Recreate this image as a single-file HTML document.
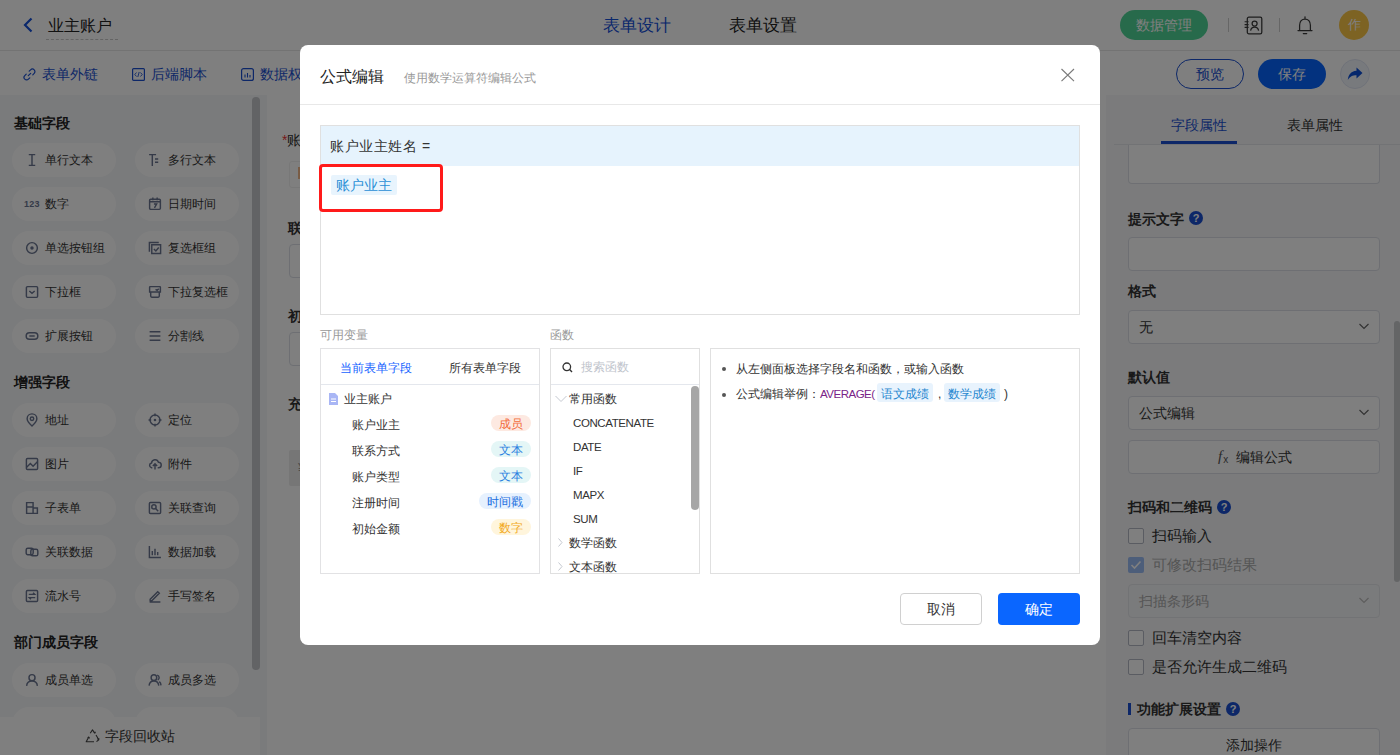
<!DOCTYPE html>
<html><head><meta charset="utf-8">
<style>
*{box-sizing:border-box;margin:0;padding:0}
html,body{width:1400px;height:755px;overflow:hidden;background:#fff;font-family:"Liberation Sans",sans-serif;color:#333}
.a{position:absolute;white-space:nowrap}
#top{position:absolute;left:0;top:0;width:1400px;height:51px;background:#fff;border-bottom:1px solid #e6e6e6}
#tool{position:absolute;left:0;top:51px;width:1400px;height:44px;background:#fff}
#left{position:absolute;left:0;top:95px;width:267px;height:660px;background:#f5f6f8}
#canvas{position:absolute;left:267px;top:95px;width:839px;height:660px;background:#fff}
#right{position:absolute;left:1106px;top:95px;width:294px;height:660px;background:#f6f7f9}
#mask{position:absolute;left:0;top:0;width:1400px;height:755px;background:rgba(0,0,0,.5)}
#modal{position:absolute;left:300px;top:45px;width:800px;height:600px;background:#fff;border-radius:8px}
.pill{position:absolute;height:34px;width:104px;border-radius:17px;background:#fff;font-size:13px;line-height:33px;color:#333}
.pill i{position:absolute;left:16px;top:0;font-style:normal}
.pill span{position:absolute;left:32px;top:1px;font-size:12px}
.tag{position:absolute;height:16px;border-radius:8px;font-size:12px;line-height:18px;text-align:center}
.fn{left:22px;font-size:11.5px;line-height:14px;color:#333;letter-spacing:-0.4px}
.sec{position:absolute;left:14px;font-size:14px;font-weight:bold;color:#222}
</style></head><body>
<div id="top">
  <svg class="a" style="left:22px;top:17px" width="12" height="16" viewBox="0 0 12 16"><path d="M9.5 1.5 L3 8 L9.5 14.5" fill="none" stroke="#1550d8" stroke-width="2.2"/></svg>
  <div class="a" style="left:48px;top:16px;font-size:16px;line-height:20px;color:#222">业主账户</div>
  <div class="a" style="left:46px;top:39px;width:72px;border-top:1px dashed #c8c8c8"></div>
  <div class="a" style="left:603px;top:16px;font-size:17px;line-height:20px;color:#1550d8">表单设计</div>
  <div class="a" style="left:729px;top:16px;font-size:17px;line-height:20px;color:#222">表单设置</div>
  <div class="a" style="left:1120px;top:10px;width:88px;height:30px;border-radius:15px;background:#4fd496;color:#fff;font-size:14px;line-height:30px;text-align:center">数据管理</div>
  <div class="a" style="left:1228px;top:18px;width:1px;height:14px;background:#ccc"></div>
  <svg class="a" style="left:1244px;top:16px" width="19" height="19" viewBox="0 0 19 19"><rect x="3.3" y="1.2" width="14.5" height="16.6" rx="1.6" fill="none" stroke="#3a3a3a" stroke-width="1.25"/><circle cx="10.6" cy="7.6" r="2.5" fill="none" stroke="#3a3a3a" stroke-width="1.25"/><path d="M6.6 14.6C7 12.2 8.5 11 10.6 11S14.2 12.2 14.6 14.6" fill="none" stroke="#3a3a3a" stroke-width="1.25"/><path d="M0.6 5.8H4.6M0.6 8.6H4.6M0.6 11.4H4.6" stroke="#3a3a3a" stroke-width="1.1"/></svg>
  <div class="a" style="left:1279px;top:18px;width:1px;height:14px;background:#ccc"></div>
  <svg class="a" style="left:1297px;top:16px" width="16" height="19" viewBox="0 0 16 19"><path d="M8 0.8V2.8M2.6 14.4V9.2C2.6 5.6 4.9 3 8 3S13.4 5.6 13.4 9.2V14.4M1 14.6H15M6.3 17.6H9.7" fill="none" stroke="#3a3a3a" stroke-width="1.25" stroke-linecap="round"/></svg>
  <div class="a" style="left:1339px;top:10px;width:30px;height:30px;border-radius:15px;background:#fac646;color:#fff;font-size:13px;line-height:30px;text-align:center">作</div>
</div>
<div id="tool">
  <svg class="a" style="left:23px;top:17px" width="13" height="13" viewBox="0 0 13 13"><path d="M5.3 7.7L7.7 5.3M6.2 3.2L7.6 1.8A2.4 2.4 0 0 1 11.2 5.4L9.8 6.8M6.8 9.8L5.4 11.2A2.4 2.4 0 0 1 1.8 7.6L3.2 6.2" fill="none" stroke="#1a4fd0" stroke-width="1.2" stroke-linecap="round"/></svg>
  <div class="a" style="left:42px;top:15px;font-size:14px;line-height:16px;color:#1a4fd0">表单外链</div>
  <svg class="a" style="left:132px;top:17px" width="13" height="13" viewBox="0 0 13 13"><rect x="0.6" y="0.6" width="11.8" height="11.8" rx="1" fill="none" stroke="#1a4fd0" stroke-width="1.2"/><path d="M4.5 4.5L2.8 6.5L4.5 8.5M8.5 4.5L10.2 6.5L8.5 8.5M7.2 4L5.8 9" fill="none" stroke="#1a4fd0" stroke-width="0.9"/></svg>
  <div class="a" style="left:151px;top:15px;font-size:14px;line-height:16px;color:#1a4fd0">后端脚本</div>
  <svg class="a" style="left:241px;top:17px" width="13" height="13" viewBox="0 0 13 13"><rect x="0.6" y="0.6" width="11.8" height="11.8" rx="2" fill="none" stroke="#1a4fd0" stroke-width="1.2"/><path d="M4 6.5V9.5M6.5 5V9.5M9 7V9.5" stroke="#1a4fd0" stroke-width="1.1"/></svg>
  <div class="a" style="left:260px;top:15px;font-size:14px;line-height:16px;color:#1a4fd0">数据权限</div>
  <div class="a" style="left:1176px;top:8px;width:68px;height:30px;border:1.3px solid #1a4fd0;border-radius:15px;font-size:14px;line-height:28px;text-align:center;color:#1a4fd0">预览</div>
  <div class="a" style="left:1258px;top:8px;width:68px;height:30px;border-radius:15px;background:#0664ff;font-size:14px;line-height:30px;text-align:center;color:#fff">保存</div>
  <div class="a" style="left:1340px;top:8px;width:30px;height:30px;border-radius:15px;background:#f1f4fb;border:1px solid #dfe5f2"></div>
  <svg class="a" style="left:1347px;top:16px" width="16" height="14" viewBox="0 0 16 14"><path d="M9.5 0.5L15.5 6L9.5 11.5V8.3C5.5 8.3 3 9.5 0.8 13C1.3 8 3.8 4.2 9.5 3.8Z" fill="#0a4fd8"/></svg>
</div>
<div id="left">
<div class="sec" style="top:20px">基础字段</div>
<div class="pill" style="left:12px;top:48px"><svg class="a" style="left:13px;top:10px" width="14" height="14" viewBox="-0.5 -0.5 13 13"><path d="M3 1H9M6 1V11M3 11H9" fill="none" stroke="#6a7590" stroke-width="1.35"/></svg><span style="left:33px">单行文本</span></div>
<div class="pill" style="left:135px;top:48px"><svg class="a" style="left:13px;top:10px" width="14" height="14" viewBox="-0.5 -0.5 13 13"><path d="M0.5 1H7M3.5 1V11.5M6 5H9M6 8H9" fill="none" stroke="#6a7590" stroke-width="1.35"/></svg><span style="left:33px">多行文本</span></div>
<div class="pill" style="left:12px;top:92px"><div class="a" style="left:12px;top:12px;font-size:9px;line-height:10px;font-weight:bold;color:#6a7590;letter-spacing:0.2px">123</div><span style="left:33px">数字</span></div>
<div class="pill" style="left:135px;top:92px"><svg class="a" style="left:13px;top:10px" width="14" height="14" viewBox="-0.5 -0.5 13 13"><rect x="1" y="1.5" width="10" height="9.5" rx="1" fill="none" stroke="#6a7590" stroke-width="1.35"/><path d="M1 4H11M4 0V2.5M8 0V2.5M5 6H7.5L5.5 9.5" fill="none" stroke="#6a7590" stroke-width="1.35"/></svg><span style="left:33px">日期时间</span></div>
<div class="pill" style="left:12px;top:136px"><svg class="a" style="left:13px;top:10px" width="14" height="14" viewBox="-0.5 -0.5 13 13"><circle cx="6" cy="6" r="5" fill="none" stroke="#6a7590" stroke-width="1.35"/><circle cx="6" cy="6" r="1.6" fill="#6a7590"/></svg><span style="left:33px">单选按钮组</span></div>
<div class="pill" style="left:135px;top:136px"><svg class="a" style="left:13px;top:10px" width="14" height="14" viewBox="-0.5 -0.5 13 13"><path d="M0.8 9.5V0.8H9.5M3 3H11.2V11.2H3Z M5 7L6.8 8.8L9.5 5.5" fill="none" stroke="#6a7590" stroke-width="1.35"/></svg><span style="left:33px">复选框组</span></div>
<div class="pill" style="left:12px;top:180px"><svg class="a" style="left:13px;top:10px" width="14" height="14" viewBox="-0.5 -0.5 13 13"><rect x="0.8" y="1" width="10.4" height="10" rx="1" fill="none" stroke="#6a7590" stroke-width="1.35"/><path d="M3.5 5L6 7.2L8.5 5" fill="none" stroke="#6a7590" stroke-width="1.35"/></svg><span style="left:33px">下拉框</span></div>
<div class="pill" style="left:135px;top:180px"><svg class="a" style="left:13px;top:10px" width="14" height="14" viewBox="-0.5 -0.5 13 13"><path d="M1.5 1H10.5Q11 1 11 1.5V6H1V1.5Q1 1 1.5 1ZM2 6V9.8Q2 10.8 3 10.8H9Q10 10.8 10 9.8V6M6.5 3.5L8 4.5L9.5 3" fill="none" stroke="#6a7590" stroke-width="1.35"/></svg><span style="left:33px">下拉复选框</span></div>
<div class="pill" style="left:12px;top:224px"><svg class="a" style="left:13px;top:10px" width="14" height="14" viewBox="-0.5 -0.5 13 13"><rect x="0.6" y="3" width="10.8" height="6" rx="3" fill="none" stroke="#6a7590" stroke-width="1.35"/><path d="M3.5 6H8.5" fill="none" stroke="#6a7590" stroke-width="1.35"/></svg><span style="left:33px">扩展按钮</span></div>
<div class="pill" style="left:135px;top:224px"><svg class="a" style="left:13px;top:10px" width="14" height="14" viewBox="-0.5 -0.5 13 13"><path d="M1 2H11M1 6H11M1 10H11" fill="none" stroke="#6a7590" stroke-width="1.35"/></svg><span style="left:33px">分割线</span></div>
<div class="sec" style="top:279px">增强字段</div>
<div class="pill" style="left:12px;top:308px"><svg class="a" style="left:13px;top:10px" width="14" height="14" viewBox="-0.5 -0.5 13 13"><path d="M6 11.5C6 11.5 1.5 7.5 1.5 4.8A4.5 4.5 0 0 1 10.5 4.8C10.5 7.5 6 11.5 6 11.5Z" fill="none" stroke="#6a7590" stroke-width="1.35"/><circle cx="6" cy="4.8" r="1.6" fill="none" stroke="#6a7590" stroke-width="1.35"/></svg><span style="left:33px">地址</span></div>
<div class="pill" style="left:135px;top:308px"><svg class="a" style="left:13px;top:10px" width="14" height="14" viewBox="-0.5 -0.5 13 13"><circle cx="6" cy="6" r="4.6" fill="none" stroke="#6a7590" stroke-width="1.35"/><circle cx="6" cy="6" r="1.2" fill="#6a7590"/><path d="M6 0V2.5M6 9.5V12M0 6H2.5M9.5 6H12" fill="none" stroke="#6a7590" stroke-width="1.35"/></svg><span style="left:33px">定位</span></div>
<div class="pill" style="left:12px;top:352px"><svg class="a" style="left:13px;top:10px" width="14" height="14" viewBox="-0.5 -0.5 13 13"><rect x="0.8" y="0.8" width="10.4" height="10.4" rx="1" fill="none" stroke="#6a7590" stroke-width="1.35"/><path d="M1 9L4.5 5.5L7 8L11 4" fill="none" stroke="#6a7590" stroke-width="1.35"/></svg><span style="left:33px">图片</span></div>
<div class="pill" style="left:135px;top:352px"><svg class="a" style="left:13px;top:10px" width="14" height="14" viewBox="-0.5 -0.5 13 13"><path d="M3.5 9.5H2.8A2.3 2.3 0 0 1 2.8 5A3.3 3.3 0 0 1 9.2 4.3A2.6 2.6 0 0 1 9.2 9.5H8.5M6 11V6M4 7.8L6 5.8L8 7.8" fill="none" stroke="#6a7590" stroke-width="1.35"/></svg><span style="left:33px">附件</span></div>
<div class="pill" style="left:12px;top:396px"><svg class="a" style="left:13px;top:10px" width="14" height="14" viewBox="-0.5 -0.5 13 13"><path d="M1 1H7V11H1ZM1 5H7M7 6H11V11H7" fill="none" stroke="#6a7590" stroke-width="1.35"/></svg><span style="left:33px">子表单</span></div>
<div class="pill" style="left:135px;top:396px"><svg class="a" style="left:13px;top:10px" width="14" height="14" viewBox="-0.5 -0.5 13 13"><rect x="0.8" y="0.8" width="10.4" height="10.4" rx="1" fill="none" stroke="#6a7590" stroke-width="1.35"/><circle cx="5" cy="5" r="2" fill="none" stroke="#6a7590" stroke-width="1.35"/><path d="M6.5 6.5L9 9" fill="none" stroke="#6a7590" stroke-width="1.35"/></svg><span style="left:33px">关联查询</span></div>
<div class="pill" style="left:12px;top:440px"><svg class="a" style="left:13px;top:10px" width="14" height="14" viewBox="-0.5 -0.5 13 13"><rect x="0.6" y="2.5" width="6.5" height="6" rx="1.5" fill="none" stroke="#6a7590" stroke-width="1.35"/><rect x="4.9" y="3.5" width="6.5" height="6" rx="1.5" fill="none" stroke="#6a7590" stroke-width="1.35"/></svg><span style="left:33px">关联数据</span></div>
<div class="pill" style="left:135px;top:440px"><svg class="a" style="left:13px;top:10px" width="14" height="14" viewBox="-0.5 -0.5 13 13"><path d="M0.8 0.5V11.2H11.5M3.5 9V5M6 9V3M8.5 9V6" fill="none" stroke="#6a7590" stroke-width="1.35"/></svg><span style="left:33px">数据加载</span></div>
<div class="pill" style="left:12px;top:484px"><svg class="a" style="left:13px;top:10px" width="14" height="14" viewBox="-0.5 -0.5 13 13"><rect x="0.8" y="0.8" width="10.4" height="10.4" rx="1" fill="none" stroke="#6a7590" stroke-width="1.35"/><path d="M3 4.5H8.5L7 3M9 7.5H3.5L5 9" fill="none" stroke="#6a7590" stroke-width="1.35"/></svg><span style="left:33px">流水号</span></div>
<div class="pill" style="left:135px;top:484px"><svg class="a" style="left:13px;top:10px" width="14" height="14" viewBox="-0.5 -0.5 13 13"><path d="M1.5 9L8.5 2L10 3.5L3 10.5H1.5ZM1 11.5H11" fill="none" stroke="#6a7590" stroke-width="1.35"/></svg><span style="left:33px">手写签名</span></div>
<div class="sec" style="top:539px">部门成员字段</div>
<div class="pill" style="left:12px;top:568px"><svg class="a" style="left:13px;top:10px" width="14" height="14" viewBox="-0.5 -0.5 13 13"><circle cx="6" cy="3.8" r="2.8" fill="none" stroke="#6a7590" stroke-width="1.35"/><path d="M1 11.5C1.3 8.5 3.3 7 6 7S10.7 8.5 11 11.5" fill="none" stroke="#6a7590" stroke-width="1.35"/></svg><span style="left:33px">成员单选</span></div>
<div class="pill" style="left:135px;top:568px"><svg class="a" style="left:13px;top:10px" width="14" height="14" viewBox="-0.5 -0.5 13 13"><circle cx="5" cy="3.8" r="2.6" fill="none" stroke="#6a7590" stroke-width="1.35"/><path d="M0.5 11.2C0.8 8.5 2.6 7 5 7S9.2 8.5 9.5 11.2M8 1.5A2.4 2.4 0 0 1 8.5 6M10 7.5C11 8.3 11.5 9.5 11.6 11" fill="none" stroke="#6a7590" stroke-width="1.35"/></svg><span style="left:33px">成员多选</span></div>
<div class="pill" style="left:12px;top:612px"><svg class="a" style="left:13px;top:10px" width="14" height="14" viewBox="-0.5 -0.5 13 13"></svg><span style="left:33px">部门单选</span></div>
<div class="pill" style="left:135px;top:612px"><svg class="a" style="left:13px;top:10px" width="14" height="14" viewBox="-0.5 -0.5 13 13"></svg><span style="left:33px">部门多选</span></div>
<div class="a" style="left:252px;top:2px;width:8px;height:573px;border-radius:4px;background:#c4c6ca"></div>
<div class="a" style="left:0;top:622px;width:260px;height:38px;background:#fff"></div>
<svg class="a" style="left:85px;top:634px" width="15" height="14" viewBox="0 0 15 14"><path d="M5.2 4.2L7.5 0.9L9.6 4M8.6 3.2L9.8 4.2L10.4 2.7M11 6L13.8 10.8L11.5 12.6M12.3 9.6L13.7 10.9L13.9 9.2M9 12.8H1.2L3.6 8.2M2.6 8.9L3.7 8L4.6 9.4" fill="none" stroke="#444" stroke-width="1.1" stroke-linejoin="round"/></svg>
<div class="a" style="left:105px;top:633px;font-size:14px;line-height:16px;color:#333">字段回收站</div>
</div>
<div id="canvas">
<div class="a" style="left:15px;top:37px;font-size:14px;line-height:16px;color:#333"><span style="color:#e33">*</span>账户业主</div>
<div class="a" style="left:22px;top:66px;width:400px;height:27px;border:1px solid #f0f0f0;border-radius:3px"></div>
<div class="a" style="left:31px;top:72px;width:2px;height:12px;background:#f3b98a"></div>
<div class="a" style="left:21px;top:125px;font-size:14px;line-height:16px;color:#333;font-weight:bold">联系方式</div>
<div class="a" style="left:22px;top:149px;width:400px;height:34px;border:1px solid #dcdfe6;border-radius:4px"></div>
<div class="a" style="left:21px;top:213px;font-size:14px;line-height:16px;color:#333;font-weight:bold">初始金额</div>
<div class="a" style="left:22px;top:237px;width:400px;height:34px;border:1px solid #dcdfe6;border-radius:4px"></div>
<div class="a" style="left:21px;top:301px;font-size:14px;line-height:16px;color:#333;font-weight:bold">充值金额</div>
<div class="a" style="left:22px;top:355px;width:400px;height:36px;background:#ececec;border-radius:2px"></div>
<div class="a" style="left:31px;top:365px;font-size:14px;line-height:16px;color:#999">¥</div>
</div>
<div id="right">

<div class="a" style="left:65px;top:22px;font-size:14px;line-height:16px;color:#1a4fd0;">字段属性</div>
<div class="a" style="left:181px;top:22px;font-size:14px;line-height:16px;color:#333;">表单属性</div>
<div class="a" style="left:8px;top:49px;width:286px;height:1px;background:#e4e6ea"></div>
<div class="a" style="left:55px;top:46px;width:76px;height:3px;background:#1a4fd0"></div>
<div class="a" style="left:22px;top:50px;width:252px;height:39px;background:#fff;border:1px solid #dcdfe6;border-top:none;border-radius:0 0 4px 4px;"></div>
<div class="a" style="left:22px;top:116px;font-size:14px;line-height:16px;color:#333;font-weight:bold;">提示文字</div>
<div class="a" style="left:83px;top:116px;width:14px;height:14px;border-radius:7px;background:#1a4fd0;color:#fff;font-size:11px;line-height:14px;text-align:center;font-weight:bold">?</div>
<div class="a" style="left:22px;top:142px;width:252px;height:34px;background:#fff;border:1px solid #dcdfe6;border-radius:4px;"></div>
<div class="a" style="left:22px;top:188px;font-size:14px;line-height:16px;color:#333;font-weight:bold;">格式</div>
<div class="a" style="left:22px;top:215px;width:252px;height:34px;background:#fff;border:1px solid #dcdfe6;border-radius:4px;"></div>
<div class="a" style="left:33px;top:224px;font-size:14px;line-height:16px;color:#333;">无</div>
<svg class="a" style="left:253px;top:228px" width="10" height="7" viewBox="0 0 10 7"><path d="M0.5 1L5 5.5L9.5 1" fill="none" stroke="#666" stroke-width="1.2"/></svg>
<div class="a" style="left:22px;top:274px;font-size:14px;line-height:16px;color:#333;font-weight:bold;">默认值</div>
<div class="a" style="left:22px;top:301px;width:252px;height:34px;background:#fff;border:1px solid #dcdfe6;border-radius:4px;"></div>
<div class="a" style="left:33px;top:310px;font-size:14px;line-height:16px;color:#333;">公式编辑</div>
<svg class="a" style="left:253px;top:314px" width="10" height="7" viewBox="0 0 10 7"><path d="M0.5 1L5 5.5L9.5 1" fill="none" stroke="#666" stroke-width="1.2"/></svg>
<div class="a" style="left:22px;top:345px;width:252px;height:34px;background:#fff;border:1px solid #dcdfe6;border-radius:4px;"></div>
<div class="a" style="left:112px;top:353px;font-size:15px;line-height:16px;color:#555;font-family:'Liberation Serif',serif;font-style:italic">f<span style="font-size:10px;font-style:normal;font-family:'Liberation Sans',sans-serif;position:relative;top:2px;left:1px">x</span></div>
<div class="a" style="left:130px;top:354px;font-size:14px;line-height:16px;color:#333;">编辑公式</div>
<div class="a" style="left:22px;top:404px;font-size:14px;line-height:16px;color:#333;font-weight:bold;">扫码和二维码</div>
<div class="a" style="left:111px;top:405px;width:14px;height:14px;border-radius:7px;background:#1a4fd0;color:#fff;font-size:11px;line-height:14px;text-align:center;font-weight:bold">?</div>
<div class="a" style="left:22px;top:433px;width:16px;height:16px;border-radius:2px;background:#fff;border:1px solid #b4b8c4"></div>
<div class="a" style="left:46px;top:433px;font-size:14.5px;line-height:16px;color:#333;">扫码输入</div>
<div class="a" style="left:22px;top:462px;width:16px;height:16px;border-radius:2px;background:#9bbcf5"></div><svg class="a" style="left:24px;top:465px" width="12" height="10" viewBox="0 0 12 10"><path d="M1.5 5L4.5 8L10.5 1.5" fill="none" stroke="#fff" stroke-width="1.6"/></svg>
<div class="a" style="left:46px;top:462px;font-size:14.5px;line-height:16px;color:#aaa;">可修改扫码结果</div>
<div class="a" style="left:22px;top:489px;width:252px;height:34px;background:#f5f6f8;border:1px solid #e4e6ea;border-radius:4px;"></div>
<div class="a" style="left:33px;top:498px;font-size:14px;line-height:16px;color:#aaa;">扫描条形码</div>
<svg class="a" style="left:253px;top:502px" width="10" height="7" viewBox="0 0 10 7"><path d="M0.5 1L5 5.5L9.5 1" fill="none" stroke="#bbb" stroke-width="1.2"/></svg>
<div class="a" style="left:22px;top:535px;width:16px;height:16px;border-radius:2px;background:#fff;border:1px solid #b4b8c4"></div>
<div class="a" style="left:46px;top:535px;font-size:14.5px;line-height:16px;color:#333;">回车清空内容</div>
<div class="a" style="left:22px;top:564px;width:16px;height:16px;border-radius:2px;background:#fff;border:1px solid #b4b8c4"></div>
<div class="a" style="left:46px;top:564px;font-size:14.5px;line-height:16px;color:#333;">是否允许生成二维码</div>
<div class="a" style="left:22px;top:608px;width:3px;height:12px;background:#1a4fd0"></div>
<div class="a" style="left:31px;top:606px;font-size:14px;line-height:16px;color:#333;font-weight:bold;">功能扩展设置</div>
<div class="a" style="left:120px;top:607px;width:14px;height:14px;border-radius:7px;background:#1a4fd0;color:#fff;font-size:11px;line-height:14px;text-align:center;font-weight:bold">?</div>
<div class="a" style="left:22px;top:633px;width:252px;height:62px;background:#fff;border:1px solid #dcdfe6;border-radius:4px;"></div>
<div class="a" style="left:120px;top:642px;font-size:14px;line-height:16px;color:#333;">添加操作</div>
<div class="a" style="left:288px;top:226px;width:6px;height:261px;border-radius:3px;background:#c8cacd"></div>
</div>
<div id="mask"></div>
<div id="modal">
  <div class="a" style="left:20px;top:22px;font-size:16px;line-height:20px;color:#222">公式编辑</div>
  <div class="a" style="left:104px;top:25px;font-size:12px;line-height:16px;color:#999">使用数学运算符编辑公式</div>
  <div class="a" style="left:0;top:59px;width:800px;border-top:1px solid #e8e8e8"></div>
  <svg class="a" style="left:760px;top:23px" width="15" height="14" viewBox="0 0 15 14"><path d="M1.5 1L14 13.2M14 1L1.5 13.2" stroke="#7a7a7a" stroke-width="1.15" fill="none"/></svg>
  <!-- formula box -->
  <div class="a" style="left:20px;top:80px;width:760px;height:190px;border:1px solid #e0e0e0">
    <div class="a" style="left:0;top:0;width:758px;height:40px;background:#e6f3fd"></div>
    <div class="a" style="left:9px;top:12px;font-size:14px;line-height:16px;color:#333;letter-spacing:0.6px">账户业主姓名 =</div>
    <div class="a" style="left:10px;top:49px;width:66px;height:20px;background:#e8f4fd;border-radius:2px"></div>
    <div class="a" style="left:15px;top:51px;font-size:14px;line-height:16px;color:#2a8fd6">账户业主</div>
  </div>
  <div class="a" style="left:19px;top:119px;width:124px;height:48px;border:3px solid #ff1a1a;border-radius:4px"></div>
  <!-- labels -->
  <div class="a" style="left:20px;top:283px;font-size:12px;line-height:14px;color:#999">可用变量</div>
  <div class="a" style="left:250px;top:283px;font-size:12px;line-height:14px;color:#999">函数</div>
  <!-- variables panel -->
  <div class="a" style="left:20px;top:303px;width:220px;height:226px;border:1px solid #e2e2e4">
    <div class="a" style="left:19px;top:12px;font-size:12px;line-height:14px;color:#1764ff">当前表单字段</div>
    <div class="a" style="left:128px;top:12px;font-size:12px;line-height:14px;color:#333">所有表单字段</div>
    <div class="a" style="left:0;top:35px;width:218px;border-top:1px solid #e4e7ed"></div>
    <svg class="a" style="left:7px;top:44px" width="11" height="12" viewBox="0 0 11 12"><path d="M1 0H7L10 3V12H1Z" fill="#a9b6f5"/><path d="M3 6H8M3 8.5H8" stroke="#fff" stroke-width="1"/></svg>
    <div class="a" style="left:23px;top:43px;font-size:12px;line-height:14px;color:#333">业主账户</div>
    <div class="a" style="left:31px;top:69px;font-size:12px;line-height:14px;color:#333">账户业主</div>
    <div class="a" style="left:31px;top:95px;font-size:12px;line-height:14px;color:#333">联系方式</div>
    <div class="a" style="left:31px;top:121px;font-size:12px;line-height:14px;color:#333">账户类型</div>
    <div class="a" style="left:31px;top:147px;font-size:12px;line-height:14px;color:#333">注册时间</div>
    <div class="a" style="left:31px;top:173px;font-size:12px;line-height:14px;color:#333">初始金额</div>
    <div class="a tag" style="left:170px;top:66px;width:40px;background:#fde9e1;color:#f26b3a">成员</div>
    <div class="a tag" style="left:170px;top:92px;width:40px;background:#e4f6f6;color:#2a7fe0">文本</div>
    <div class="a tag" style="left:170px;top:118px;width:40px;background:#e4f6f6;color:#2a7fe0">文本</div>
    <div class="a tag" style="left:158px;top:144px;width:52px;background:#e6f1fe;color:#1a6fe0">时间戳</div>
    <div class="a tag" style="left:170px;top:170px;width:40px;background:#fff5dc;color:#f2a922">数字</div>
  </div>
  <!-- functions panel -->
  <div class="a" style="left:250px;top:303px;width:150px;height:226px;border:1px solid #e0e0e0;overflow:hidden">
    <svg class="a" style="left:11px;top:13px" width="11" height="11" viewBox="0 0 11 11"><circle cx="4.8" cy="4.8" r="3.8" fill="none" stroke="#333" stroke-width="1.3"/><path d="M7.6 7.6L10 10" stroke="#333" stroke-width="1.4"/></svg>
    <div class="a" style="left:30px;top:11px;font-size:12px;line-height:14px;color:#c0c4cc">搜索函数</div>
    <div class="a" style="left:0;top:35px;width:148px;border-top:1px solid #e4e7ed"></div>
    <svg class="a" style="left:4px;top:46px" width="12" height="8" viewBox="0 0 12 8"><path d="M0.5 1L6 6.5L11.5 1" fill="none" stroke="#c4c8d0" stroke-width="1"/></svg>
    <div class="a" style="left:18px;top:43px;font-size:12px;line-height:14px;color:#333">常用函数</div>
    <div class="a fn" style="top:67px">CONCATENATE</div>
    <div class="a fn" style="top:91px">DATE</div>
    <div class="a fn" style="top:115px">IF</div>
    <div class="a fn" style="top:139px">MAPX</div>
    <div class="a fn" style="top:163px">SUM</div>
    <svg class="a" style="left:7px;top:189px" width="5" height="9" viewBox="0 0 5 9"><path d="M0.5 0.5L4 4.5L0.5 8.5" fill="none" stroke="#c4c8d0" stroke-width="1"/></svg>
    <div class="a" style="left:18px;top:187px;font-size:12px;line-height:14px;color:#333">数学函数</div>
    <svg class="a" style="left:7px;top:213px" width="5" height="9" viewBox="0 0 5 9"><path d="M0.5 0.5L4 4.5L0.5 8.5" fill="none" stroke="#c4c8d0" stroke-width="1"/></svg>
    <div class="a" style="left:18px;top:211px;font-size:12px;line-height:14px;color:#333">文本函数</div>
    <div class="a" style="left:140px;top:37px;width:8px;height:124px;border-radius:4px;background:#a6a6a6"></div>
  </div>
  <!-- help panel -->
  <div class="a" style="left:410px;top:303px;width:370px;height:226px;border:1px solid #e0e0e0">
    <div class="a" style="left:11px;top:18px;width:4px;height:4px;border-radius:2px;background:#555"></div>
    <div class="a" style="left:25px;top:13px;font-size:12px;line-height:14px;color:#333">从左侧面板选择字段名和函数，或输入函数</div>
    <div class="a" style="left:11px;top:44px;width:4px;height:4px;border-radius:2px;background:#555"></div>
    <div class="a" style="left:25px;top:38px;font-size:12px;line-height:14px;color:#333">公式编辑举例：</div>
    <div class="a" style="left:109px;top:38px;font-size:12px;line-height:14px;color:#7a2388;letter-spacing:-0.5px;font-size:11.5px">AVERAGE(</div>
    <div class="a" style="left:166px;top:34px;width:56px;height:19px;border-radius:3px;background:#e8f3fd"></div>
    <div class="a" style="left:170px;top:38px;font-size:12px;line-height:14px;color:#1f86cf">语文成绩</div>
    <div class="a" style="left:227px;top:38px;font-size:12px;line-height:14px;color:#333">,</div>
    <div class="a" style="left:233px;top:34px;width:56px;height:19px;border-radius:3px;background:#e8f3fd"></div>
    <div class="a" style="left:237px;top:38px;font-size:12px;line-height:14px;color:#1f86cf">数学成绩</div>
    <div class="a" style="left:293px;top:38px;font-size:12px;line-height:14px;color:#333">)</div>
  </div>
  <!-- buttons -->
  <div class="a" style="left:600px;top:548px;width:82px;height:32px;border:1px solid #d0d0d0;border-radius:4px;font-size:14px;line-height:30px;text-align:center;color:#333">取消</div>
  <div class="a" style="left:698px;top:548px;width:82px;height:32px;border-radius:4px;background:#0a66ff;font-size:14px;line-height:32px;text-align:center;color:#fff">确定</div>
</div>
</body></html>
